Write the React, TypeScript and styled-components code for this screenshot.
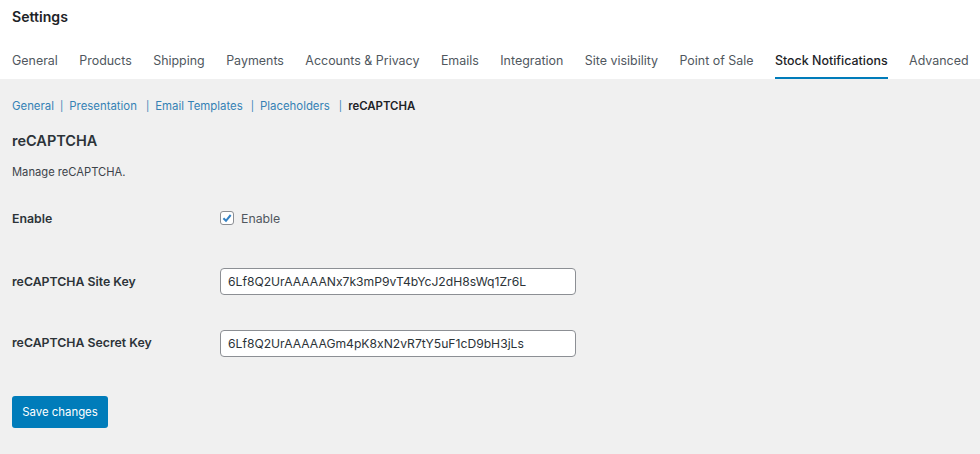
import React from "react"
import styled, { createGlobalStyle } from "styled-components"

const GlobalStyle = createGlobalStyle`
    html, body {
        margin: 0;
        background: #f0f0f0;
        font-family: Inter, "Liberation Sans", sans-serif;
    }
`

const Page = styled.div`
    width: 980px;
    height: 454px;
    overflow: hidden;
    background: #f0f0f0;
`

const Header = styled.header`
    background: #fff;
    height: 79px;
    padding: 0 12px;
    box-sizing: border-box;
`

const Title = styled.h1`
    margin: 0;
    padding-top: 8px;
    font-size: 14.1px;
    line-height: 17px;
    font-weight: 600;
    color: #1d2327;
`

const Tabs = styled.nav`
    display: flex;
    gap: 21.45px;
    margin-top: 26px;
`

const Tab = styled.a<{ $active?: boolean }>`
    height: 28px;
    padding-top: 1px;
    box-sizing: border-box;
    font-size: 12.45px;
    line-height: 17px;
    white-space: nowrap;
    font-weight: ${({ $active }) => ($active ? 500 : 400)};
    color: ${({ $active }) => ($active ? "#1d2327" : "#50575e")};
    border-bottom: 2px solid ${({ $active }) => ($active ? "#007cba" : "transparent")};
`

const Content = styled.main`
    padding: 0 12px;
`

const SubNav = styled.div`
    display: flex;
    align-items: center;
    padding-top: 19px;
    font-size: 11.4px;
    line-height: 16px;
    white-space: nowrap;
`

const SubLink = styled.a`
    color: #3582b5;
`

const Separator = styled.span<{ $left: number; $right: number }>`
    color: #3582b5;
    font-size: 10px;
    margin: 0 ${({ $right }) => $right}px 0 ${({ $left }) => $left}px;
`

const SubCurrent = styled.strong`
    color: #1d2327;
    font-weight: 600;
`

const Heading = styled.h2`
    margin: 17px 0 0;
    font-size: 14.5px;
    line-height: 20px;
    font-weight: 600;
    color: #2c3338;
`

const Description = styled.p`
    margin: 13px 0 0;
    font-size: 11.2px;
    line-height: 16px;
    color: #3c434a;
`

const Row = styled.div<{ $height: number }>`
    display: grid;
    grid-template-columns: 208px 1fr;
    height: ${({ $height }) => $height}px;
`

const FormArea = styled.div`
    margin-top: 29px;
`

const Label = styled.label<{ $offset: number }>`
    padding-top: ${({ $offset }) => $offset}px;
    font-size: 12.3px;
    line-height: 16px;
    font-weight: 600;
    color: #2c3338;
`

const CheckWrap = styled.div`
    display: flex;
    align-items: center;
    gap: 7px;
    height: 18px;
    font-size: 12.3px;
    color: #50575e;
`

const CheckBox = styled.span`
    display: flex;
    align-items: center;
    justify-content: center;
    width: 12px;
    height: 12px;
    background: #fff;
    border: 1px solid #8c8f94;
    border-radius: 3px;
    color: #3582c4;
`

const TextInput = styled.input`
    display: block;
    width: 356px;
    height: 27px;
    box-sizing: border-box;
    padding: 0 7px;
    margin: 0;
    background: #fff;
    border: 1px solid #8c8f94;
    border-radius: 4px;
    outline: none;
    font-family: inherit;
    font-size: 12.15px;
    color: #2c3338;
`

const SaveButton = styled.button`
    display: block;
    width: 96px;
    height: 32px;
    margin: 0;
    padding: 0;
    background: #007cba;
    border: 0;
    border-radius: 3px;
    color: #fff;
    font-family: inherit;
    font-size: 11.4px;
    font-weight: 400;
`

const tabs = [
    "General",
    "Products",
    "Shipping",
    "Payments",
    "Accounts & Privacy",
    "Emails",
    "Integration",
    "Site visibility",
    "Point of Sale",
    "Stock Notifications",
    "Advanced",
]

export default function App() {
    return (
        <Page>
            <GlobalStyle />
            <Header>
                <Title>Settings</Title>
                <Tabs>
                    {tabs.map((t) => (
                        <Tab key={t} $active={t === "Stock Notifications"}>{t}</Tab>
                    ))}
                </Tabs>
            </Header>
            <Content>
                <SubNav>
                    <SubLink>General</SubLink>
                    <Separator $left={6} $right={6}>|</Separator>
                    <SubLink>Presentation</SubLink>
                    <Separator $left={9} $right={6}>|</Separator>
                    <SubLink>Email Templates</SubLink>
                    <Separator $left={8} $right={6}>|</Separator>
                    <SubLink>Placeholders</SubLink>
                    <Separator $left={9} $right={6}>|</Separator>
                    <SubCurrent>reCAPTCHA</SubCurrent>
                </SubNav>
                <Heading>reCAPTCHA</Heading>
                <Description>Manage reCAPTCHA.</Description>
                <FormArea>
                    <Row $height={59}>
                        <Label $offset={2}>Enable</Label>
                        <CheckWrap>
                            <CheckBox>
                                <svg width="12" height="12" viewBox="0 0 12 12" fill="none">
                                    <path d="M2.4 6.2 5 8.8 9.7 3" stroke="currentColor" strokeWidth="2" />
                                </svg>
                            </CheckBox>
                            Enable
                        </CheckWrap>
                    </Row>
                    <Row $height={62}>
                        <Label $offset={6}>reCAPTCHA Site Key</Label>
                        <TextInput readOnly value="6Lf8Q2UrAAAAANx7k3mP9vT4bYcJ2dH8sWq1Zr6L" />
                    </Row>
                    <Row $height={66}>
                        <Label $offset={5}>reCAPTCHA Secret Key</Label>
                        <TextInput readOnly value="6Lf8Q2UrAAAAAGm4pK8xN2vR7tY5uF1cD9bH3jLs" />
                    </Row>
                </FormArea>
                <SaveButton>Save changes</SaveButton>
            </Content>
        </Page>
    )
}
